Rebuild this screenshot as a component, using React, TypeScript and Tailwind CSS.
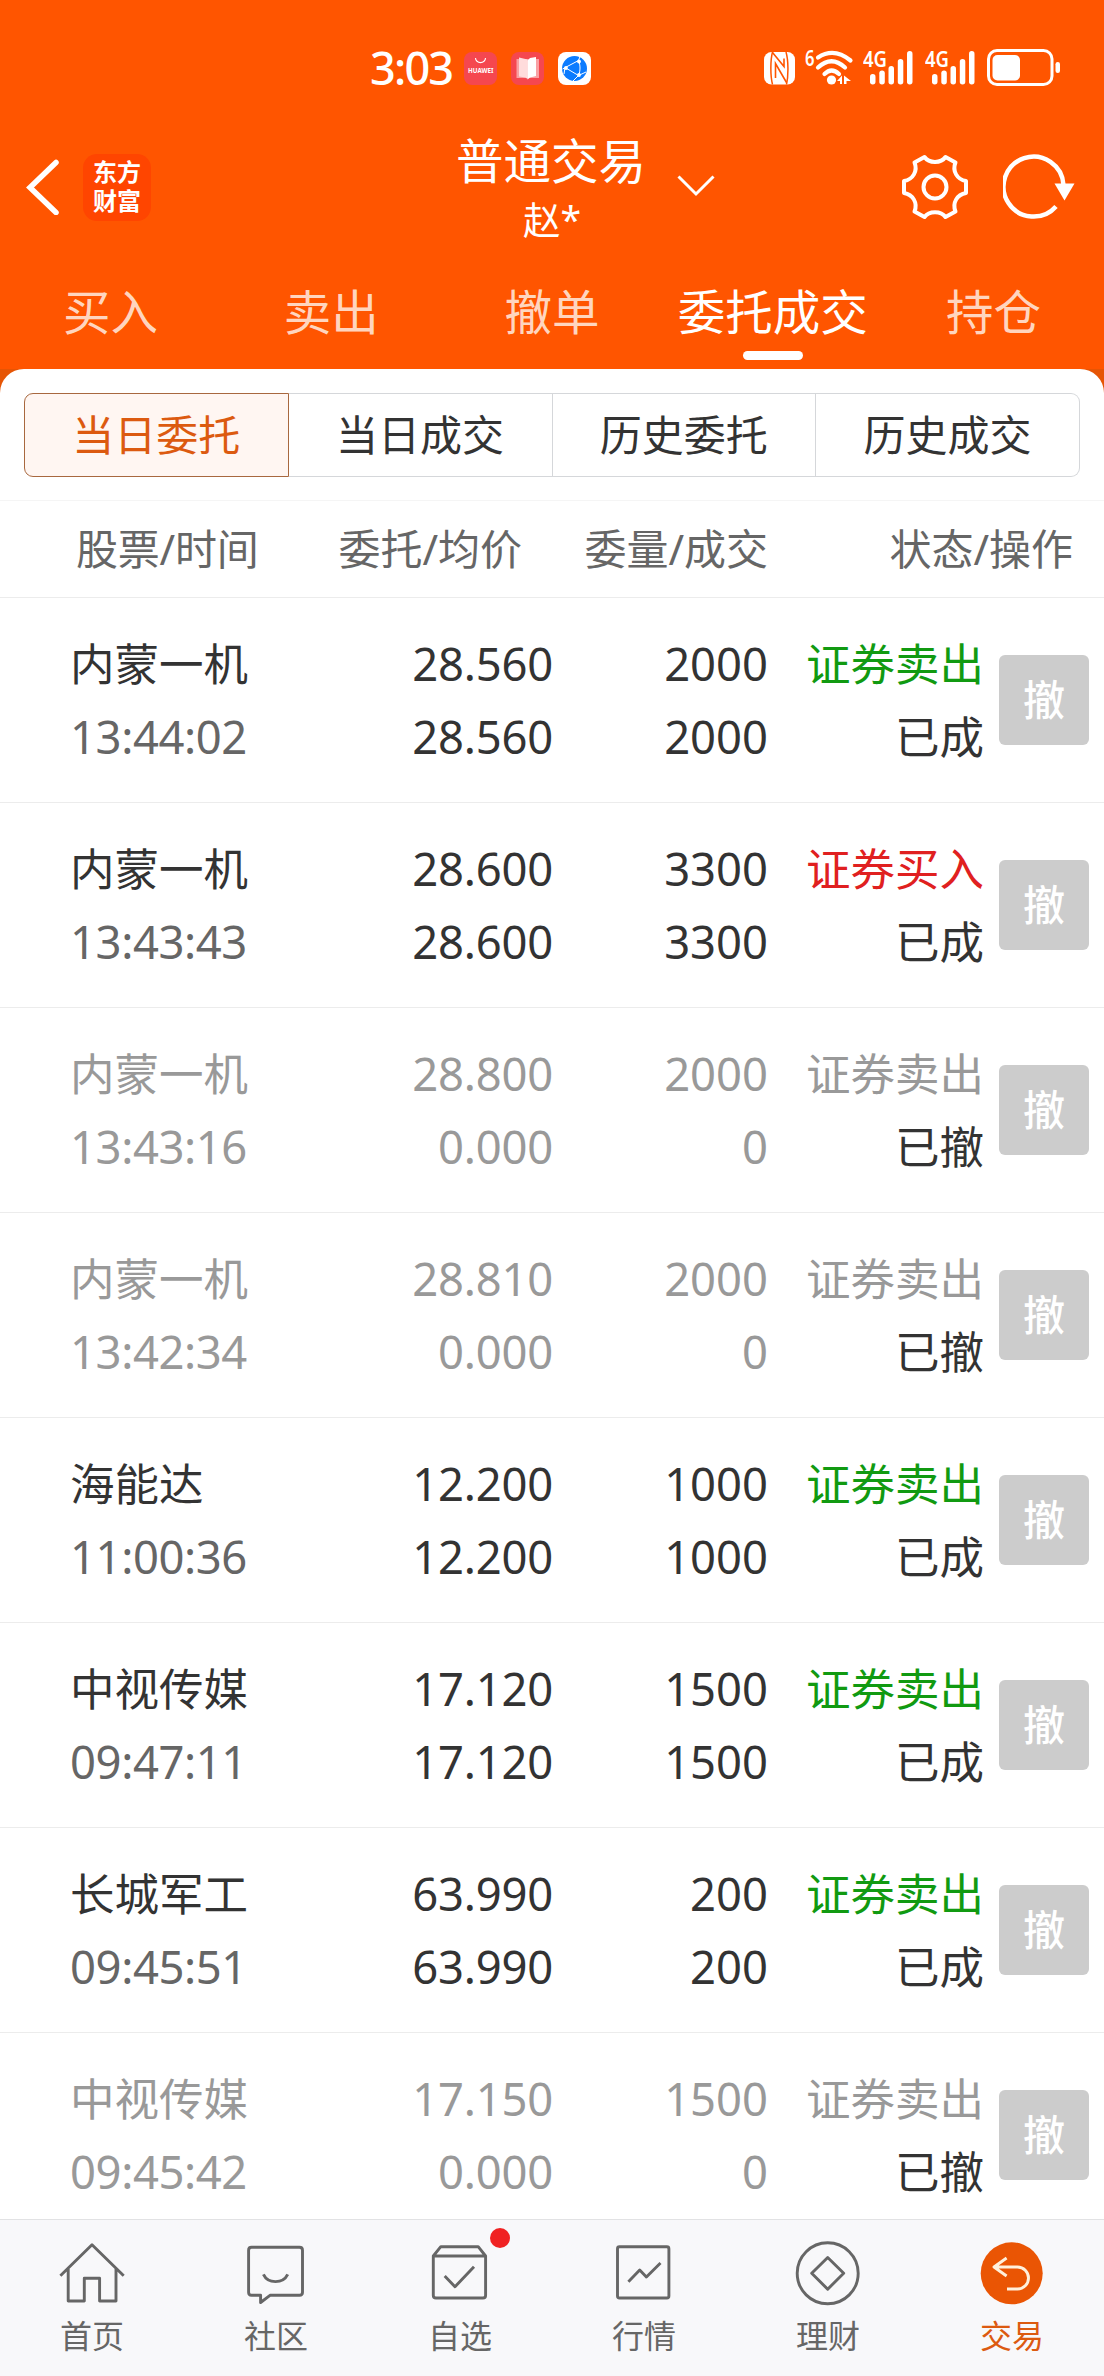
import React from 'react';

type Order = {
  name: string;
  time: string;
  price: string;
  avg: string;
  qty: string;
  filled: string;
  side: '证券卖出' | '证券买入';
  status: '已成' | '已撤';
};

const orders: Order[] = [
  { name: '内蒙一机', time: '13:44:02', price: '28.560', avg: '28.560', qty: '2000', filled: '2000', side: '证券卖出', status: '已成' },
  { name: '内蒙一机', time: '13:43:43', price: '28.600', avg: '28.600', qty: '3300', filled: '3300', side: '证券买入', status: '已成' },
  { name: '内蒙一机', time: '13:43:16', price: '28.800', avg: '0.000', qty: '2000', filled: '0', side: '证券卖出', status: '已撤' },
  { name: '内蒙一机', time: '13:42:34', price: '28.810', avg: '0.000', qty: '2000', filled: '0', side: '证券卖出', status: '已撤' },
  { name: '海能达', time: '11:00:36', price: '12.200', avg: '12.200', qty: '1000', filled: '1000', side: '证券卖出', status: '已成' },
  { name: '中视传媒', time: '09:47:11', price: '17.120', avg: '17.120', qty: '1500', filled: '1500', side: '证券卖出', status: '已成' },
  { name: '长城军工', time: '09:45:51', price: '63.990', avg: '63.990', qty: '200', filled: '200', side: '证券卖出', status: '已成' },
  { name: '中视传媒', time: '09:45:42', price: '17.150', avg: '0.000', qty: '1500', filled: '0', side: '证券卖出', status: '已撤' },
];

function Signal() {
  return (
    <svg className="-mt-[10px]" width="50" height="46" viewBox="0 -10 50 46" fill="#fff">
      <text x="0" y="18" fontSize="22" fontWeight="600" textLength="24" lengthAdjust="spacingAndGlyphs">4G</text>
      <rect x="7" y="25" width="5.5" height="10.5" rx="2.7" />
      <rect x="16.3" y="21.5" width="5.5" height="14" rx="2.7" />
      <rect x="25.5" y="17" width="5.5" height="18.5" rx="2.7" />
      <rect x="34.8" y="10" width="5.5" height="25.5" rx="2.7" />
      <rect x="44" y="2" width="5.5" height="33.5" rx="2.7" />
    </svg>
  );
}

function StatusBar() {
  return (
    <div className="flex h-[136px] items-start pt-[49px] text-white">
      <div className="ml-[370px] w-[94px] pt-[2px] text-[45px] leading-[33px] font-medium tracking-[-1.8px]">3:03</div>
      <div className="flex gap-[14px] pt-[3px]">
        <svg width="33" height="33" viewBox="0 0 33 33">
          <rect width="33" height="33" rx="8" fill="#f5474f" />
          <path d="M11.5 6a5 4.6 0 0 0 10 0" stroke="#fff" strokeWidth="1.1" fill="none" />
          <text x="4" y="21.3" fontSize="7" fontWeight="700" fill="#fff" textLength="25.5" lengthAdjust="spacingAndGlyphs">HUAWEI</text>
        </svg>
        <svg width="33" height="33" viewBox="0 0 33 33">
          <rect width="33" height="33" rx="8" fill="#f5474f" />
          <path d="M5.5 7H28v19H5.5z" fill="#f9a0a3" />
          <path d="M8 5.5l8.5 2V27l-2-1.500L8 24.500z" fill="#ffdcdc" />
          <path d="M16.500 8.500L19 6l6-1v19l-6 1.500-2.500 2z" fill="#fff" />
        </svg>
        <svg width="33" height="33" viewBox="0 0 33 33">
          <rect width="33" height="33" rx="8" fill="#fff" />
          <circle cx="16.500" cy="16.500" r="12.500" fill="#0b7bff" />
          <g stroke="#fff" strokeWidth="1" fill="none">
            <path d="M4.500 17L20.500 8.500M7 15.500L20.500 23.500M20.500 23.500C22.500 19 22.500 13 20.500 8.500M20.500 8.500L22 4.500M7 15.500L6 22M20.500 23.500L28 20M20.500 23.500L15 29" />
          </g>
          <g fill="#fff"><circle cx="21" cy="9.500" r="1.900" /><circle cx="8" cy="16" r="1.900" /><circle cx="21" cy="23" r="1.900" /></g>
        </svg>
      </div>
      <svg className="mt-[3px] ml-[173px]" width="31" height="33" viewBox="0 0 31 33">
        <rect width="31" height="32.500" rx="7.500" fill="#fff" />
        <path d="M8.500 0C6.300 8 6.300 24 8.500 32.500" stroke="#ff5500" strokeWidth="1.500" fill="none" />
        <path d="M22 0C24.500 8 24.500 24 22.500 32.500" stroke="#ff5500" strokeWidth="1.500" fill="none" />
        <path d="M8.500 .500L20 14.500V6.500M11.500 26V11.500L22.500 30.500" stroke="#ff5500" strokeWidth="1.600" fill="none" />
      </svg>
      <svg className="-mt-[10px] ml-[10px]" width="50" height="48" viewBox="0 -10 50 48" fill="#fff">
        <text x="0" y="16.500" fontSize="22" fontWeight="600" textLength="9.500" lengthAdjust="spacingAndGlyphs">6</text>
        <g fill="none" stroke="#fff" strokeWidth="4.200" strokeLinecap="round">
          <path d="M13 8.500Q29 -2 45.500 11.500" />
          <path d="M13 18.500Q26.500 6 40 18.500" />
          <path d="M19.500 25Q26.500 18 34 25" />
        </g>
        <circle cx="26.500" cy="31" r="4.600" />
        <path d="M32 32l5-5.500V35h-2v-3zM39 26.500l7 5.500h-4.500v3H39z" />
      </svg>
      <div className="ml-[8px] flex gap-[12px]"><Signal /><Signal /></div>
      <svg className="ml-[12px]" width="74" height="37" viewBox="0 0 74 37">
        <rect x="1.500" y="1.500" width="63.500" height="34" rx="8.500" fill="none" stroke="#fff" strokeWidth="3" />
        <rect x="5.500" y="6" width="27.500" height="25.500" rx="5" fill="#fff" />
        <rect x="68.500" y="13" width="4.500" height="11" rx="2.200" fill="#fff" />
      </svg>
    </div>
  );
}

function Gear() {
  return (
    <svg width="68" height="68" viewBox="-34 -34 68 68" fill="none" stroke="#fff" strokeWidth="4" strokeLinejoin="round">
      <path d="M-10.500 -30C-6 -23.500 6 -23.500 10.500 -30L20.500 -24.500C17 -16 22 -7.500 31 -6V6C22 7.500 17 16 20.500 24.500L10.500 30C6 23.500 -6 23.500 -10.500 30L-20.500 24.500C-17 16 -22 7.500 -31 6V-6C-22 -7.500 -17 -16 -20.500 -24.500Z" />
      <circle r="11.500" />
    </svg>
  );
}

function TitleBar() {
  return (
    <div className="flex h-[136px] items-start text-white">
      <div className="flex w-[400px] pt-[18px]">
        <svg className="mt-[5px] ml-[26px]" width="34" height="56" viewBox="0 0 34 56" fill="none" stroke="#fff" strokeWidth="5.500" strokeLinecap="round">
          <path d="M30 3.500L4 28.500L30 53.500" />
        </svg>
        <div className="ml-[23px] flex h-[67px] w-[68px] flex-col items-center justify-center rounded-[14px] bg-[#ff4500] pb-[3px] text-[24px] leading-[29px] font-bold">
          <span>东方</span>
          <span>财富</span>
        </div>
      </div>
      <div className="flex w-[302px] flex-col items-center">
        <div className="text-[47.500px] leading-[50px]">普通交易</div>
        <div className="pl-[2px] text-[37.500px] leading-[67px]">赵*</div>
      </div>
      <svg className="mt-[39px] -ml-[25px]" width="38" height="23" viewBox="0 0 38 23" fill="none" stroke="#fff" strokeWidth="3">
        <path d="M1.500 1.500L19 19L36.500 1.500" />
      </svg>
      <div className="ml-[186px] flex pt-[17px]">
        <Gear />
        <svg className="ml-[34px]" width="74" height="68" viewBox="0 0 74 68">
          <path d="M60.500 32A30 30 0 1 0 53 53.500" fill="none" stroke="#fff" strokeWidth="4.500" />
          <path d="M51.500 30.500H71.500L61.500 47.500Z" fill="#fff" />
        </svg>
      </div>
    </div>
  );
}

const tabs = ['买入', '卖出', '撤单', '委托成交', '持仓'];

function Tabs() {
  return (
    <div className="grid h-[97px] grid-cols-5">
      {tabs.map((t) => {
        const active = t === '委托成交';
        return (
          <div key={t} className="flex flex-col items-center pt-[10px]">
            <span className={`text-[47.500px] leading-[60px] ${active ? 'text-white' : 'text-[#ffd5bf]'}`}>{t}</span>
            {active && <span className="mt-[9px] h-[9px] w-[60px] rounded-full bg-white" />}
          </div>
        );
      })}
    </div>
  );
}

function Segments() {
  const base = 'flex h-full flex-1 items-center justify-center border pb-[2px]';
  return (
    <div className="flex h-[132px] items-start border-b border-[#f5f5f5] px-[24px] pt-[24px] text-[42px] text-[#333]">
      <div className="flex h-[84px] w-full">
        <div className={`${base} rounded-l-[9px] border-[#a8683f] bg-[#fff6f2] text-[#dc5a10]`}>当日委托</div>
        <div className={`${base} border-l-0 border-[#d5d7da]`}>当日成交</div>
        <div className={`${base} border-l-0 border-[#d5d7da]`}>历史委托</div>
        <div className={`${base} rounded-r-[9px] border-l-0 border-[#d5d7da]`}>历史成交</div>
      </div>
    </div>
  );
}

function OrderRow({ o }: { o: Order }) {
  const off = o.status === '已撤';
  const main = off ? 'text-[#999]' : 'text-[#333]';
  const sideColor = off ? 'text-[#999]' : o.side === '证券卖出' ? 'text-[#119a11]' : 'text-[#e02020]';
  return (
    <div className="flex h-[205px] shrink-0 items-center border-b border-[#ececec] text-[44.500px] leading-[73px]">
      <div className="w-[260px] pl-[70px]">
        <div className={`whitespace-nowrap ${main}`}>{o.name}</div>
        <div className={`text-[45.400px] tracking-[-0.400px] ${off ? 'text-[#999]' : 'text-[#666]'}`}>{o.time}</div>
      </div>
      <div className={`w-[293px] text-right text-[45.400px] tracking-[-0.200px] ${main}`}>
        <div>{o.price}</div>
        <div>{o.avg}</div>
      </div>
      <div className={`w-[215px] text-right text-[45.400px] ${main}`}>
        <div>{o.qty}</div>
        <div>{o.filled}</div>
      </div>
      <div className="w-[216px] text-right">
        <div className={sideColor}>{o.side}</div>
        <div className="text-[#333]">{o.status}</div>
      </div>
      <div className="ml-[15px] flex h-[90px] w-[90px] items-center justify-center rounded-[6px] bg-[#ccc] pb-[2px] text-[42px] font-medium text-white">撤</div>
    </div>
  );
}

const navItems: { label: string; icon: React.ReactNode }[] = [
  {
    label: '首页',
    icon: <path d="M3.400 37.700L35 6.700L66.700 37.700M11.200 31V63H27.300V40.300H42.600V63H59V31" />,
  },
  {
    label: '社区',
    icon: (
      <>
        <path d="M10.500 9.300H58.500Q61.500 9.300 61.500 12.300V54.300Q61.500 57.300 58.500 57.300H29L19.600 64.500V57.300H10.500Q7.600 57.300 7.600 54.300V12.300Q7.600 9.300 10.500 9.300Z" />
        <path d="M22.400 36.300C27 46 42 46 46.700 36.300" />
      </>
    ),
  },
  {
    label: '自选',
    icon: (
      <>
        <path d="M8.300 18L15.800 8.700H53.200L60.600 18V57.500Q60.600 60 58 60H11Q8.300 60 8.300 57.500ZM8.300 18H60.600" />
        <path d="M19.700 38L30 48.700L49 28.700" />
      </>
    ),
  },
  {
    label: '行情',
    icon: (
      <>
        <rect x="8.500" y="8.700" width="51.400" height="51.300" rx="2" />
        <path d="M19.400 43.700L30.700 32L37.400 39L51.500 25" />
      </>
    ),
  },
  {
    label: '理财',
    icon: (
      <>
        <circle cx="34.700" cy="35.300" r="30.500" />
        <path d="M34.700 19.500L50.700 35.300L34.700 51.200L18.700 35.300Z" />
      </>
    ),
  },
  {
    label: '交易',
    icon: (
      <>
        <circle cx="34.700" cy="35.300" r="31" fill="#ea5504" stroke="none" />
        <path d="M29.600 20L17 29L29.600 38M17 29H40.500A11 11 0 0 1 40.500 51H30" stroke="#fff0dc" />
      </>
    ),
  },
];

function BottomNav() {
  return (
    <div className="grid h-[157px] shrink-0 grid-cols-6 border-t border-[#e2e2e4] bg-[#f8f8fa]">
      {navItems.map((n) => (
        <div key={n.label} className={`flex flex-col items-center pt-[18px] ${n.label === '交易' ? 'text-[#dc5a10]' : 'text-[#666]'}`}>
          <div className="relative">
            <svg width="70" height="70" viewBox="0 0 70 70" fill="none" stroke="currentColor" strokeWidth="2.900" strokeLinejoin="round">
              {n.icon}
            </svg>
            {n.label === '自选' && <span className="absolute -top-[10px] left-[65px] h-[20px] w-[20px] rounded-full bg-[#f02222]" />}
          </div>
          <span className="mt-[8px] text-[32px] leading-[40px]">{n.label}</span>
        </div>
      ))}
    </div>
  );
}

export default function App() {
  return (
    <div className="flex h-[2376px] w-[1104px] flex-col overflow-hidden bg-white font-['Noto_Sans','Noto_Sans_CJK_SC',sans-serif]">
      <header className="h-[369px] shrink-0 bg-[#ff5500]">
        <StatusBar />
        <TitleBar />
        <Tabs />
      </header>
      <div className="flex min-h-0 flex-1 flex-col bg-[linear-gradient(#e65505_0_24px,#fff_24px)]">
        <main className="flex min-h-0 flex-1 flex-col overflow-hidden rounded-t-[24px] bg-white">
          <Segments />
          <div className="flex h-[97px] shrink-0 items-center justify-end border-b border-[#ececec] pr-[31px] pb-[2px] text-[42px] whitespace-nowrap text-[#666]">
            <div className="w-[182px] text-right tracking-[-0.200px]">股票/时间</div>
            <div className="w-[264px] text-right">委托/均价</div>
            <div className="w-[246px] text-right">委量/成交</div>
            <div className="w-[305px] text-right">状态/操作</div>
          </div>
          <div className="flex min-h-0 flex-1 flex-col overflow-hidden">
            {orders.map((o) => (
              <OrderRow key={o.time} o={o} />
            ))}
          </div>
        </main>
        <BottomNav />
      </div>
    </div>
  );
}
